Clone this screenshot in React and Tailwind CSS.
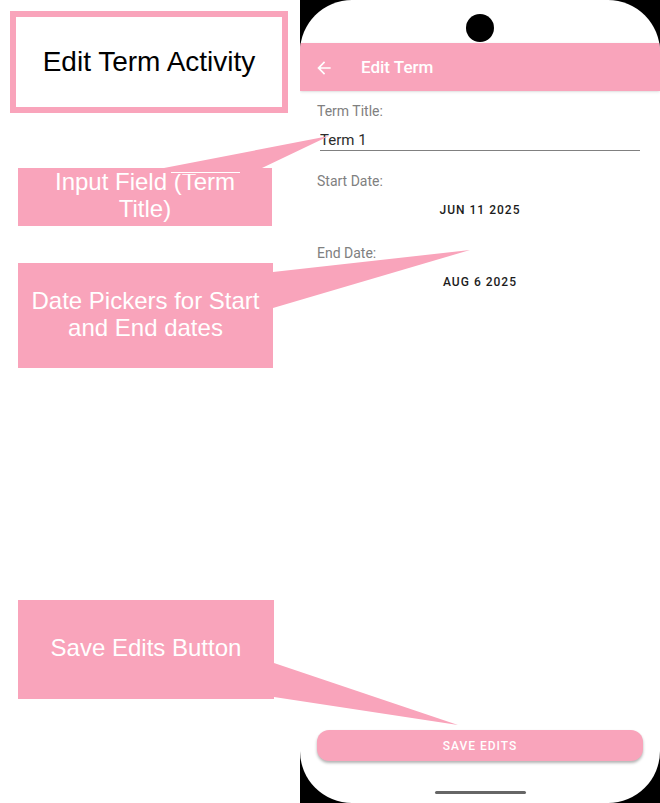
const sans = "font-['Liberation_Sans',Arial,sans-serif]";
const roboto = "font-[Roboto,sans-serif]";

function Callout({ children, className, tail }) {
  return (
    <div className={`relative flex justify-center bg-[#f9a4bb] text-center text-2xl leading-[27px] text-white ${className}`}>
      <p>{children}</p>
      {tail}
    </div>
  );
}

function Notes() {
  return (
    <section className={`relative z-10 flex flex-col pt-[11px] pb-[104px] ${sans}`}>
      <h1 className="mr-3 ml-2.5 flex h-[102px] items-center justify-center border-6 border-[#f9a4bb] bg-white text-[28px] text-black">
        Edit Term Activity
      </h1>
      <Callout
        className="mt-[55px] mr-7 ml-[18px] h-[58px] px-6"
        tail={
          <svg className="absolute -top-8 left-0" width="312" height="38" aria-hidden="true">
            <path d="M146 32 L311 0 L244 32 V38 H153 V32 Z" fill="#f9a4bb" />
            <path d="M153 36.5 H222" stroke="#fff" />
          </svg>
        }
      >
        Input Field (Term Title)
      </Callout>
      <Callout
        className="mt-[37px] mr-[27px] ml-[18px] h-[105px] items-center px-3 pb-1"
        tail={
          <svg className="absolute -top-[13px] left-full" width="197" height="60" aria-hidden="true">
            <path d="M0 22 L197 0 L0 58 Z" fill="#f9a4bb" />
          </svg>
        }
      >
        Date Pickers for Start and End dates
      </Callout>
      <Callout
        className="mt-auto mr-[26px] ml-[18px] h-[99px] items-center px-3 pb-1"
        tail={
          <svg className="absolute top-[63px] left-full" width="185" height="63" aria-hidden="true">
            <path d="M0 0 L184 62 L0 34 Z" fill="#f9a4bb" />
          </svg>
        }
      >
        Save Edits Button
      </Callout>
    </section>
  );
}

function DateField({ id, label, value }) {
  return (
    <div className="flex flex-col">
      <span id={id} className="text-sm leading-5 text-[#808080]">{label}</span>
      <button type="button" aria-describedby={id} className="h-[38px] text-xs font-medium tracking-[1px] text-[#1c1c1c]">
        {value}
      </button>
    </div>
  );
}

function Phone() {
  return (
    <section className={`bg-black ${roboto}`}>
      <div className="flex h-full flex-col overflow-hidden rounded-[52px] bg-white">
        <div className="flex h-[43px] justify-center pt-3.5">
          <span className="size-7 rounded-full bg-black" />
        </div>
        <header className="flex h-12 items-center gap-[27px] bg-[#f9a4bb] px-3.5 pt-0.5 text-white shadow-sm">
          <button type="button" aria-label="Back">
            <svg width="20" height="20" viewBox="0 0 24 24" fill="currentColor" aria-hidden="true">
              <path d="M20 11H7.83l5.59-5.59L12 4l-8 8 8 8 1.41-1.41L7.83 13H20v-2z" />
            </svg>
          </button>
          <h2 className="text-[17px] font-medium">Edit Term</h2>
        </header>
        <form className="flex grow flex-col px-[17px] pt-2.5">
          <label htmlFor="term-title" className="text-sm leading-5 text-[#808080]">Term Title:</label>
          <input
            id="term-title"
            defaultValue="Term 1"
            className="mx-[3px] h-[30px] border-b border-[#808080] pt-2 text-[15px] leading-5 text-[#2c2c2c] outline-none"
          />
          <div className="mt-5 flex flex-col gap-3.5">
            <DateField id="start-date" label="Start Date:" value="JUN 11 2025" />
            <DateField id="end-date" label="End Date:" value="AUG 6 2025" />
          </div>
          <button
            type="button"
            className="mt-auto h-[31px] rounded-xl bg-[#f9a4bb] text-xs font-medium tracking-[1px] text-white shadow-[0_2px_3px_rgba(0,0,0,0.3)]"
          >
            SAVE EDITS
          </button>
        </form>
        <div className="flex h-[42px] justify-center pt-[30px]">
          <span className="h-[3px] w-[91px] rounded-full bg-[#666666]" />
        </div>
      </div>
    </section>
  );
}

export default function App() {
  return (
    <main className="grid min-h-screen grid-cols-[5fr_6fr] bg-white">
      <Notes />
      <Phone />
    </main>
  );
}
